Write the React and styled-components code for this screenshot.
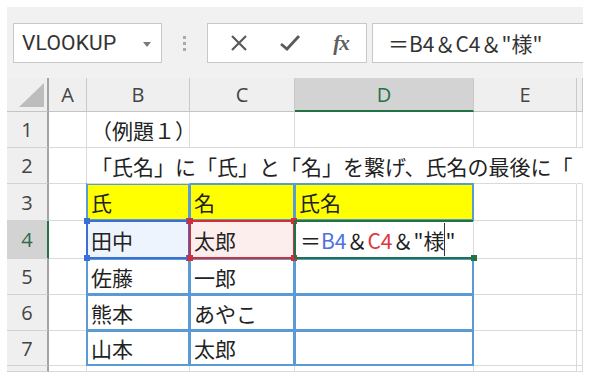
import React from "react";
import styled, { createGlobalStyle } from "styled-components";

const GlobalStyle = createGlobalStyle`
  html, body {
    margin: 0;
    padding: 0;
    background: #ffffff;
  }
  * {
    box-sizing: border-box;
  }
`;

const JP = `"Noto Sans CJK JP", "Noto Sans", sans-serif`;

const COLS = [42, 38, 103, 105, 179, 103, 6];
const ROWS = [34, 36, 36, 37, 38, 36, 36, 35, 6];

const App = () => {
  return (
    <>
      <GlobalStyle />
      <Frame>
        <Toolbar>
          <NameBox>
            <NameText>VLOOKUP</NameText>
            <Caret />
          </NameBox>
          <Grip>
            <Dot />
            <Dot />
            <Dot />
          </Grip>
          <ButtonBox>
            <ToolIcon>
              <svg width="20" height="20" viewBox="0 0 20 20">
                <path d="M3 3 L17 17 M17 3 L3 17" stroke="#5a5a5a" strokeWidth="2.2" fill="none" />
              </svg>
            </ToolIcon>
            <ToolIcon>
              <svg width="22" height="20" viewBox="0 0 22 20">
                <path d="M2 11 L8 16 L20 3" stroke="#5a5a5a" strokeWidth="2.8" fill="none" />
              </svg>
            </ToolIcon>
            <ToolIcon>
              <Fx>fx</Fx>
            </ToolIcon>
          </ButtonBox>
          <FormulaBox>
            <FormulaText>＝B4＆C4＆"様"</FormulaText>
          </FormulaBox>
        </Toolbar>

        <Sheet>
          <Corner>
            <CornerMark />
          </Corner>
          <ColHead>A</ColHead>
          <ColHead>B</ColHead>
          <ColHead>C</ColHead>
          <ColHead $active>D</ColHead>
          <ColHead>E</ColHead>
          <ColHead />

          <RowHead>1</RowHead>
          <Cell />
          <Cell>（例題１）</Cell>
          <Cell />
          <Cell />
          <Cell />
          <Cell />

          <RowHead>2</RowHead>
          <Cell />
          <Cell $open $front>「氏名」に「氏」と「名」を繋げ、氏名の最後に「</Cell>
          <Cell $open />
          <Cell $open />
          <Cell $open />
          <Cell $open />

          <RowHead>3</RowHead>
          <Cell />
          <Cell $table $fill="#ffff00">氏</Cell>
          <Cell $table $fill="#ffff00">名</Cell>
          <Cell $table $fill="#ffff00">氏名</Cell>
          <Cell />
          <Cell />

          <RowHead $active>4</RowHead>
          <Cell />
          <Cell $table $fill="#eef4fd">
            田中
            <Mark $color="#3b6fd6">
              <Handle $top $left $color="#3b6fd6" />
              <Handle $top $color="#3b6fd6" />
              <Handle $left $color="#3b6fd6" />
              <Handle $color="#3b6fd6" />
            </Mark>
          </Cell>
          <Cell $table $fill="#fdeeee">
            太郎
            <Mark $color="#d12e3c">
              <Handle $top $left $color="#d12e3c" />
              <Handle $top $color="#d12e3c" />
              <Handle $left $color="#d12e3c" />
              <Handle $color="#d12e3c" />
            </Mark>
          </Cell>
          <Cell $pad={5}>
            <span>＝</span>
            <Ref $color="#4d72dd">B4</Ref>
            <span>＆</span>
            <Ref $color="#e0353f">C4</Ref>
            <span>＆"様</span>
            <TextCaret />
            <span>"</span>
            <ActiveMark>
              <FillHandle />
            </ActiveMark>
          </Cell>
          <Cell />
          <Cell />

          <RowHead>5</RowHead>
          <Cell />
          <Cell $table>佐藤</Cell>
          <Cell $table>一郎</Cell>
          <Cell $table />
          <Cell />
          <Cell />

          <RowHead>6</RowHead>
          <Cell />
          <Cell $table>熊本</Cell>
          <Cell $table>あやこ</Cell>
          <Cell $table />
          <Cell />
          <Cell />

          <RowHead>7</RowHead>
          <Cell />
          <Cell $table>山本</Cell>
          <Cell $table>太郎</Cell>
          <Cell $table />
          <Cell />
          <Cell />

          <RowHead />
          <Cell />
          <Cell />
          <Cell />
          <Cell />
          <Cell />
          <Cell />
        </Sheet>
      </Frame>
    </>
  );
};

const Frame = styled.div`
  width: 576px;
  margin: 7px 0 0 7px;
  background: #f1f1f1;
  overflow: hidden;
`;

const Toolbar = styled.div`
  height: 71px;
  display: flex;
  align-items: flex-start;
  padding: 16px 0 0 6px;
  background: #f1f1f1;
`;

const Box = styled.div`
  height: 40px;
  background: #ffffff;
  border: 1px solid #c8c8c8;
  display: flex;
  align-items: center;
`;

const NameBox = styled(Box)`
  width: 149px;
  padding: 0 10px 0 8px;
  justify-content: space-between;
`;

const NameText = styled.span`
  font-family: Roboto, "Liberation Sans", sans-serif;
  font-size: 21px;
  color: #333333;
  letter-spacing: 0.2px;
`;

const Caret = styled.span`
  width: 0;
  height: 0;
  border-left: 4px solid transparent;
  border-right: 4px solid transparent;
  border-top: 5px solid #7a7a7a;
  margin-top: 2px;
`;

const Grip = styled.div`
  width: 45px;
  height: 40px;
  display: flex;
  flex-direction: column;
  align-items: center;
  justify-content: center;
  gap: 3px;
`;

const Dot = styled.span`
  width: 3px;
  height: 3px;
  background: #a9a9a9;
`;

const ButtonBox = styled(Box)`
  width: 160px;
  padding: 0 10px 0 16px;
  justify-content: space-between;
`;

const ToolIcon = styled.span`
  width: 30px;
  display: flex;
  align-items: center;
  justify-content: center;
`;

const Fx = styled.span`
  font-family: "Liberation Serif", serif;
  font-style: italic;
  font-weight: 700;
  font-size: 21px;
  color: #5e5e5e;
  letter-spacing: -1px;
`;

const FormulaBox = styled(Box)`
  flex: 1;
  margin-left: 5px;
  padding-left: 15px;
  border-right: none;
`;

const FormulaText = styled.span`
  font-family: ${JP};
  font-size: 21px;
  color: #333333;
  white-space: nowrap;
`;

const Sheet = styled.div`
  display: grid;
  grid-template-columns: ${COLS.map((c) => c + "px").join(" ")};
  grid-template-rows: ${ROWS.map((r) => r + "px").join(" ")};
  background: #ffffff;
  overflow: hidden;
`;

const Corner = styled.div`
  position: relative;
  background: #efefef;
  border-right: 2px solid #a3a3a3;
  border-bottom: 1px solid #c4c4c4;
`;

const CornerMark = styled.span`
  position: absolute;
  right: 3px;
  bottom: 4px;
  width: 0;
  height: 0;
  border-left: 25px solid transparent;
  border-bottom: 24px solid #bdbdbd;
`;

const ColHead = styled.div`
  display: flex;
  align-items: center;
  justify-content: center;
  font-family: "Open Sans", "Noto Sans", sans-serif;
  font-size: 20px;
  color: ${(p) => (p.$active ? "#217346" : "#444444")};
  background: ${(p) => (p.$active ? "#d3d3d3" : "#efefef")};
  border-right: 1px solid #c9c9c9;
  border-bottom: ${(p) => (p.$active ? "2px solid #217346" : "1px solid #c4c4c4")};
`;

const RowHead = styled.div`
  display: flex;
  align-items: center;
  justify-content: center;
  font-family: "Open Sans", "Noto Sans", sans-serif;
  font-size: 20px;
  color: ${(p) => (p.$active ? "#2f6b46" : "#444444")};
  background: ${(p) => (p.$active ? "#d3d3d3" : "#efefef")};
  border-bottom: 1px solid #d2d2d2;
  border-right: ${(p) => (p.$active ? "2px solid #217346" : "2px solid #a3a3a3")};
`;

const Cell = styled.div`
  position: relative;
  display: flex;
  align-items: center;
  padding-left: ${(p) => (p.$pad ? p.$pad : 4)}px;
  font-family: ${JP};
  font-size: 21px;
  color: #222222;
  white-space: nowrap;
  background: ${(p) => (p.$open ? "transparent" : p.$fill || "#ffffff")};
  border-right: ${(p) => (p.$open ? "1px solid transparent" : "1px solid #dadada")};
  border-bottom: 1px solid #dadada;
  z-index: ${(p) => (p.$front ? 2 : "auto")};

  ${(p) =>
    p.$table &&
    `
    &::after {
      content: "";
      position: absolute;
      left: -1px;
      top: -1px;
      right: -1px;
      bottom: -1px;
      border: 2px solid #5b9bd5;
      pointer-events: none;
      z-index: 1;
    }
  `}
`;

const Mark = styled.span`
  position: absolute;
  left: -1px;
  top: -1px;
  right: -1px;
  bottom: -1px;
  border: 2px solid ${(p) => p.$color};
  z-index: 3;
`;

const Handle = styled.span`
  position: absolute;
  width: 6px;
  height: 6px;
  background: ${(p) => p.$color};
  ${(p) => (p.$top ? "top: -4px;" : "bottom: -4px;")}
  ${(p) => (p.$left ? "left: -4px;" : "right: -4px;")}
`;

const ActiveMark = styled.span`
  position: absolute;
  left: -1px;
  top: -1px;
  right: 0;
  bottom: -1px;
  border: 2px solid #217346;
  border-right: none;
  z-index: 4;
`;

const FillHandle = styled.span`
  position: absolute;
  right: -4px;
  bottom: -4px;
  width: 6px;
  height: 6px;
  background: #217346;
`;

const Ref = styled.span`
  color: ${(p) => p.$color};
`;

const TextCaret = styled.span`
  display: inline-block;
  width: 1px;
  height: 33px;
  background: #333333;
`;

export default App;
